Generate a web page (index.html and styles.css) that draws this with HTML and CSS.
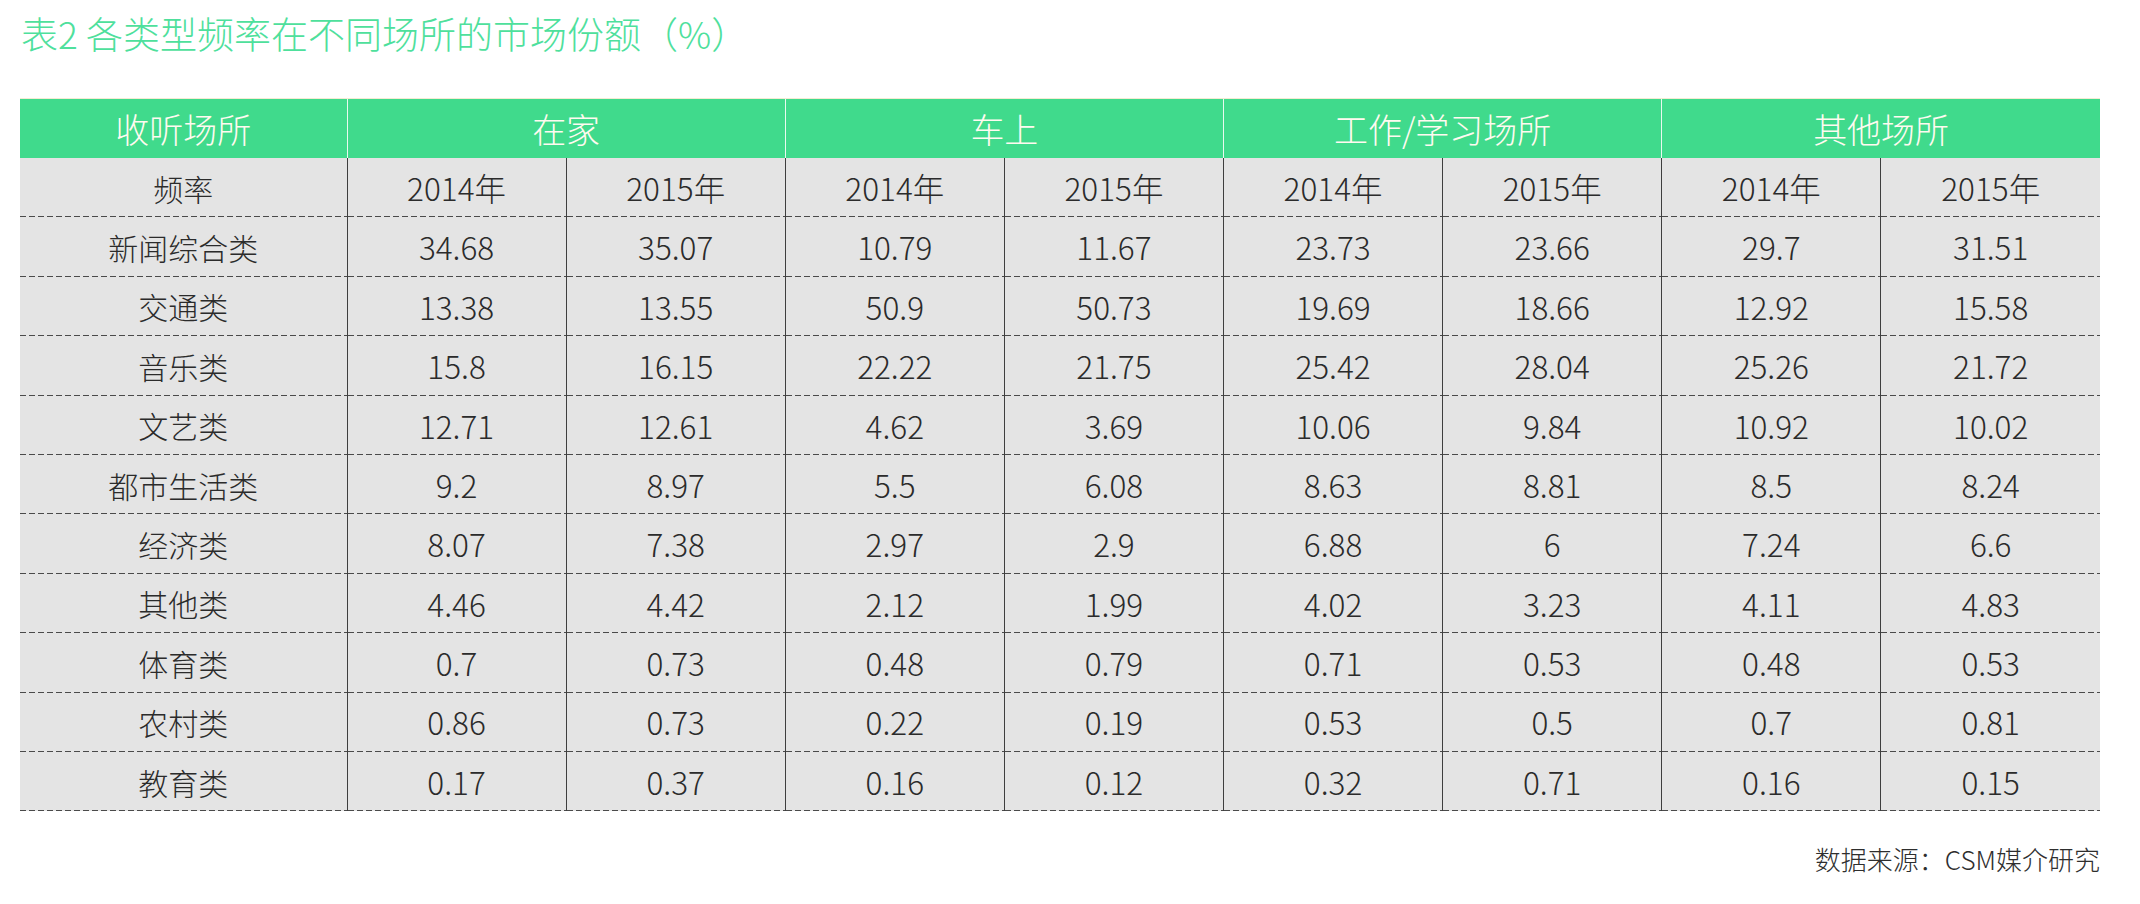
FILE: index.html
```html
<!DOCTYPE html>
<html lang="zh-CN">
<head>
<meta charset="utf-8">
<title>表2 各类型频率在不同场所的市场份额</title>
<link rel="stylesheet" href="styles.css">
</head>
<body>
<div class="page">
  <h1 class="title">表2 各类型频率在不同场所的市场份额（%）</h1>
  <table class="share">
    <colgroup>
      <col class="c-first">
      <col class="c-data"><col class="c-data"><col class="c-data"><col class="c-data">
      <col class="c-data"><col class="c-data"><col class="c-data"><col class="c-data">
    </colgroup>
    <thead>
      <tr class="head">
        <th>收听场所</th>
        <th colspan="2">在家</th>
        <th colspan="2">车上</th>
        <th colspan="2">工作/学习场所</th>
        <th colspan="2">其他场所</th>
      </tr>
    </thead>
    <tbody>
      <tr><td>频率</td><td>2014年</td><td>2015年</td><td>2014年</td><td>2015年</td><td>2014年</td><td>2015年</td><td>2014年</td><td>2015年</td></tr>
      <tr><td>新闻综合类</td><td>34.68</td><td>35.07</td><td>10.79</td><td>11.67</td><td>23.73</td><td>23.66</td><td>29.7</td><td>31.51</td></tr>
      <tr><td>交通类</td><td>13.38</td><td>13.55</td><td>50.9</td><td>50.73</td><td>19.69</td><td>18.66</td><td>12.92</td><td>15.58</td></tr>
      <tr><td>音乐类</td><td>15.8</td><td>16.15</td><td>22.22</td><td>21.75</td><td>25.42</td><td>28.04</td><td>25.26</td><td>21.72</td></tr>
      <tr><td>文艺类</td><td>12.71</td><td>12.61</td><td>4.62</td><td>3.69</td><td>10.06</td><td>9.84</td><td>10.92</td><td>10.02</td></tr>
      <tr><td>都市生活类</td><td>9.2</td><td>8.97</td><td>5.5</td><td>6.08</td><td>8.63</td><td>8.81</td><td>8.5</td><td>8.24</td></tr>
      <tr><td>经济类</td><td>8.07</td><td>7.38</td><td>2.97</td><td>2.9</td><td>6.88</td><td>6</td><td>7.24</td><td>6.6</td></tr>
      <tr><td>其他类</td><td>4.46</td><td>4.42</td><td>2.12</td><td>1.99</td><td>4.02</td><td>3.23</td><td>4.11</td><td>4.83</td></tr>
      <tr><td>体育类</td><td>0.7</td><td>0.73</td><td>0.48</td><td>0.79</td><td>0.71</td><td>0.53</td><td>0.48</td><td>0.53</td></tr>
      <tr><td>农村类</td><td>0.86</td><td>0.73</td><td>0.22</td><td>0.19</td><td>0.53</td><td>0.5</td><td>0.7</td><td>0.81</td></tr>
      <tr><td>教育类</td><td>0.17</td><td>0.37</td><td>0.16</td><td>0.12</td><td>0.32</td><td>0.71</td><td>0.16</td><td>0.15</td></tr>
    </tbody>
  </table>
  <p class="source">数据来源：CSM媒介研究</p>
</div>
</body>
</html>
```

FILE: styles.css
```css
html, body {
  margin: 0;
  padding: 0;
  background: #ffffff;
}

.page {
  width: 2080px;
  padding: 0 0 0 20px;
  font-family: "Noto Sans CJK SC", "Noto Sans", sans-serif;
  color: #2b2b2b;
}

.title {
  margin: 0;
  padding: 13px 0 0 1px;
  height: 98px;
  box-sizing: border-box;
  font-size: 37px;
  line-height: 40px;
  font-weight: 300;
  color: #4ee09c;
  letter-spacing: 0;
}

.share {
  width: 2080px;
  table-layout: fixed;
  border-collapse: collapse;
  border-spacing: 0;
}

.c-first { width: 327px; }
.c-data { width: 219.125px; }

.head th {
  height: 59px;
  padding: 0;
  background: #40da8c;
  border-top: 1px solid #f3ecd2;
  color: #fffaf0;
  font-size: 34px;
  font-weight: 300;
  line-height: 1;
  text-align: center;
}

.head th + th {
  border-left: 1px solid #e9f9ef;
}

.share td {
  height: 59.4px;
  padding: 0;
  background:
    repeating-linear-gradient(to right, #4a4a4a 0 6px, transparent 6px 9px) left bottom / 100% 1px no-repeat,
    #e4e4e4;
  font-size: 31.5px;
  font-weight: 300;
  line-height: 1;
  text-align: center;
  color: #2b2b2b;
}

.share td:first-child {
  font-size: 30px;
}

.share td + td {
  border-left: 1px solid #3e3e3e;
}

.source {
  margin: 33px 0 0;
  width: 2080px;
  text-align: right;
  font-size: 26px;
  line-height: 30px;
  font-weight: 300;
  color: #2e2e2e;
}
```
